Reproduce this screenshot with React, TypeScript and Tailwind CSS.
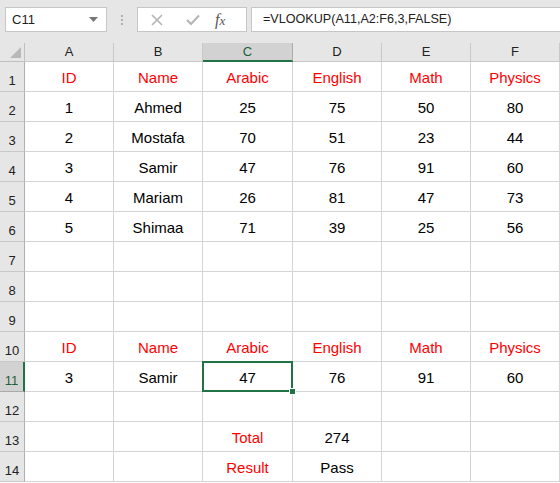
import React from "react";

const cols = ["A", "B", "C", "D", "E", "F"];
const colW = ["w-[89px]", "w-[89px]", "w-[90px]", "w-[89px]", "w-[89px]", "w-[89px]"];

type Cell = { t: string; red?: boolean };
const R = (t: string): Cell => ({ t, red: true });
const B = (t: string): Cell => ({ t });
const E: Cell = { t: "" };

const rows: Cell[][] = [
  [R("ID"), R("Name"), R("Arabic"), R("English"), R("Math"), R("Physics")],
  [B("1"), B("Ahmed"), B("25"), B("75"), B("50"), B("80")],
  [B("2"), B("Mostafa"), B("70"), B("51"), B("23"), B("44")],
  [B("3"), B("Samir"), B("47"), B("76"), B("91"), B("60")],
  [B("4"), B("Mariam"), B("26"), B("81"), B("47"), B("73")],
  [B("5"), B("Shimaa"), B("71"), B("39"), B("25"), B("56")],
  [E, E, E, E, E, E],
  [E, E, E, E, E, E],
  [E, E, E, E, E, E],
  [R("ID"), R("Name"), R("Arabic"), R("English"), R("Math"), R("Physics")],
  [B("3"), B("Samir"), B("47"), B("76"), B("91"), B("60")],
  [E, E, E, E, E, E],
  [E, E, R("Total"), B("274"), E, E],
  [E, E, R("Result"), B("Pass"), E, E],
];

export default function App() {
  return (
    <div
      className="w-[560px] h-[483px] overflow-hidden bg-white"
      style={{ fontFamily: '"Liberation Sans", Arial, sans-serif' }}
    >
      {/* toolbar */}
      <div className="h-[43px] bg-[#e6e6e6] flex items-start pt-[7px]">
        <div className="ml-[5px] w-[102px] h-[25px] bg-white border border-[#c6c6c6] flex items-center justify-between pl-[6px] pr-[8px]">
          <span className="text-[13px] text-[#222] leading-none">C11</span>
          <svg width="9" height="5" viewBox="0 0 9 5">
            <path d="M0 0 L9 0 L4.5 5 Z" fill="#777" />
          </svg>
        </div>
        <div className="w-[30px] h-[25px] flex flex-col items-center justify-center gap-[2px]">
          <div className="w-[2px] h-[2px] bg-[#b0b0b0]" />
          <div className="w-[2px] h-[2px] bg-[#b0b0b0]" />
          <div className="w-[2px] h-[2px] bg-[#b0b0b0]" />
        </div>
        <div className="w-[110px] h-[25px] bg-white border border-[#c6c6c6] flex items-center">
          <svg className="ml-[13px]" width="12" height="12" viewBox="0 0 12 12">
            <path d="M1 1 L11 11 M11 1 L1 11" stroke="#b4b4b4" strokeWidth="1.6" />
          </svg>
          <svg className="ml-[23px]" width="14" height="12" viewBox="0 0 14 12">
            <path d="M1 6 L5 10 L13 1.5" stroke="#b4b4b4" strokeWidth="2" fill="none" />
          </svg>
          <span
            className="ml-[15px] text-[16px] italic text-[#555] leading-none"
            style={{ fontFamily: '"Liberation Serif", serif' }}
          >
            f<span className="text-[13px]">x</span>
          </span>
        </div>
        <div className="ml-[4px] flex-1 h-[25px] bg-white border border-[#c6c6c6] border-r-0 flex items-center pl-[11px]">
          <span className="text-[12.6px] text-[#222] leading-none">=VLOOKUP(A11,A2:F6,3,FALSE)</span>
        </div>
      </div>

      {/* column headers */}
      <div className="flex h-[19px] bg-[#e6e6e6]">
        <div className="w-[25px] h-[19px] border-r border-b border-[#c0c0c0] relative">
          <svg className="absolute right-[3px] bottom-[3px]" width="11" height="11" viewBox="0 0 11 11">
            <path d="M11 0 L11 11 L0 11 Z" fill="#b8b8b8" />
          </svg>
        </div>
        {cols.map((c, i) =>
          c === "C" ? (
            <div
              key={c}
              className={`${colW[i]} h-[19px] bg-[#d2d2d2] border-r border-[#ababab] border-b-2 border-b-[#217346] flex items-center justify-center text-[13px] text-[#1e5e3b]`}
            >
              {c}
            </div>
          ) : (
            <div
              key={c}
              className={`${colW[i]} h-[19px] border-r border-b border-[#c8c8c8] flex items-center justify-center text-[13px] text-[#222]`}
            >
              {c}
            </div>
          )
        )}
      </div>

      {/* rows */}
      {rows.map((row, ri) => {
        const sel = ri === 10;
        return (
          <div key={ri} className={`flex h-[30px] relative ${sel ? "z-10" : ""}`}>
            {sel ? (
              <div className="w-[25px] h-[30px] bg-[#d2d2d2] border-b border-[#ababab] border-r-2 border-r-[#217346] flex items-end justify-center pb-[4px] text-[13px] leading-none text-[#1e5e3b]">
                {ri + 1}
              </div>
            ) : (
              <div className="w-[25px] h-[30px] bg-[#e6e6e6] border-b border-[#c8c8c8] border-r border-r-[#b0b0b0] flex items-end justify-center pb-[4px] text-[13px] leading-none text-[#222]">
                {ri + 1}
              </div>
            )}
            {row.map((cell, ci) => {
              const isSel = sel && ci === 2;
              return (
                <div
                  key={ci}
                  className={`${colW[ci]} h-[30px] relative border-r border-b border-[#d4d4d4] flex items-end justify-center pb-[5px] text-[15px] leading-[17px] ${
                    cell.red ? "text-[#ff0000]" : "text-black"
                  } ${isSel ? "z-10" : ""}`}
                >
                  {cell.t}
                  {isSel && (
                    <>
                      <div className="absolute left-[-1px] top-[-1px] right-[-1px] bottom-[-1px] border-2 border-[#217346] pointer-events-none" />
                      <div className="absolute right-[-4px] bottom-[-4px] w-[7px] h-[7px] bg-[#217346] border border-white" />
                    </>
                  )}
                </div>
              );
            })}
          </div>
        );
      })}
    </div>
  );
}
